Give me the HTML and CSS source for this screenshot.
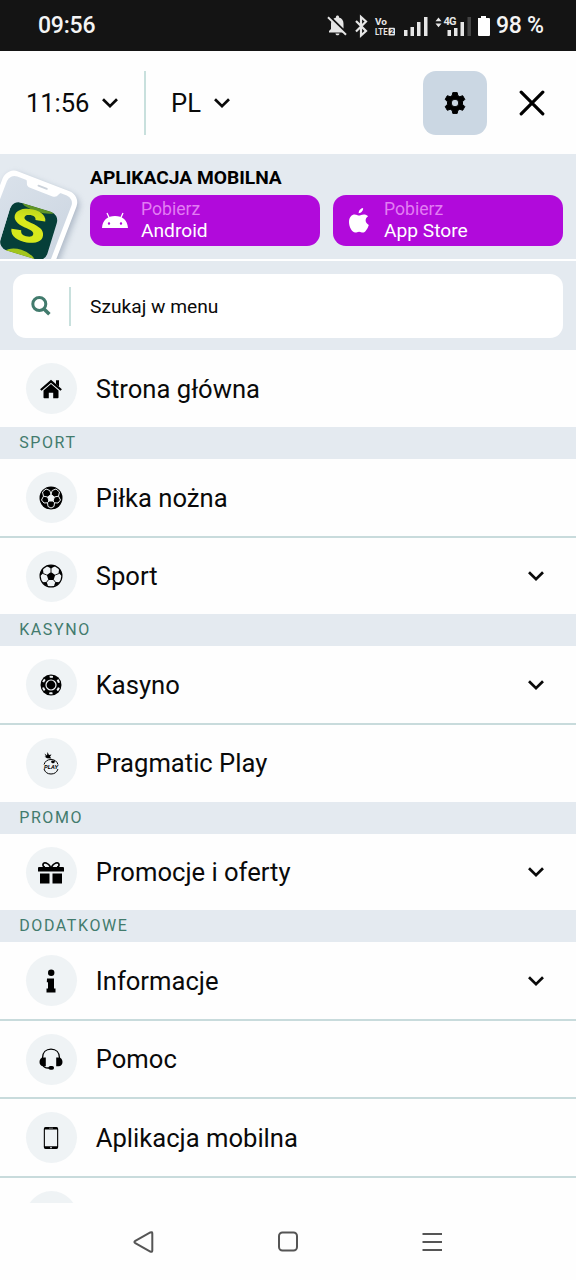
FILE: index.html
```html
<!DOCTYPE html>
<html lang="pl">
<head>
<meta charset="utf-8">
<title>Menu</title>
<link rel="stylesheet" href="styles.css">
</head>
<body>
<svg class="defs" width="0" height="0">
  <symbol id="chevron" viewBox="0 0 18 12"><path d="M2 2.200 9 9.200 16 2.200" fill="none" stroke="currentColor" stroke-width="2.700"/></symbol>
</svg>
<div class="screen">
  <div class="status">
    <span class="clock">09:56</span>
    <svg class="status-icons" width="168" height="24" viewBox="0 0 168 24" fill="#e6e6e6">
      <path d="M3 18.500v-1.600l2-2V10c0-1.500.4-2.600 1-3.500L18 18.500zM7.500 4.800C8.500 4 9.500 3.700 10 3.500V3c0-1 .6-1.500 1.500-1.500S13 2 13 3v.5c3 .7 4.500 3.200 4.500 6.300v4.700zM9.500 19.500h4c0 1-.8 1.800-2 1.800s-2-.8-2-1.800z"/>
      <path d="M2 3.300 20 20.700" stroke="#e6e6e6" stroke-width="1.900"/>
      <path d="m30 7 10 10-5 4.500V3l5 4.500-10 10" fill="none" stroke="#e6e6e6" stroke-width="2.200"/>
      <text x="49" y="10.500" class="tiny" textLength="12" lengthAdjust="spacingAndGlyphs">Vo</text>
      <text x="49" y="21.200" class="tiny" textLength="12.500" lengthAdjust="spacingAndGlyphs">LTE</text>
      <rect x="62.500" y="13.800" width="6.500" height="7.600" rx="1"/>
      <text x="63.900" y="20" class="micro">2</text>
      <path d="M78 16h3.500v6H78zM84.500 13H88v9h-3.500zM91 8h3.500v14H91zM98 3h3.500v19H98z"/>
      <path d="m109.500 7.300 3-3.800 3 3.800zm0 2.200h6l-3 3.800z"/>
      <text x="117.500" y="11" class="tiny net" textLength="13">4G</text>
      <path d="M121.500 16h3.500v6h-3.500zM128 14h3.500v8H128zM134.500 8h3.500v14h-3.500z"/>
      <path d="M141.500 3h3.500v19h-3.500z" fill="#444"/>
      <path d="M152 4h3V2h5v2h3q1 0 1 1v16q0 1-1 1h-10q-1 0-1-1z" fill="#fff"/>
    </svg>
    <span class="battery">98 %</span>
  </div>

  <div class="topbar">
    <div class="picker time"><span>11:56</span><svg width="18" height="12"><use href="#chevron"/></svg></div>
    <div class="picker lang"><span>PL</span><svg width="18" height="12"><use href="#chevron"/></svg></div>
    <div class="settings">
      <svg width="22" height="22" viewBox="0 0 22 22"><path fill-rule="evenodd" stroke="#000" stroke-width="1" stroke-linejoin="round" d="M8.800.6h4.400l.6 3 2 1.100 2.900-1 2.100 3.700L18.500 9.700v2.600l2.300 2.300-2.100 3.700-2.900-1-2 1.100-.6 3H8.800l-.6-3-2-1.100-2.900 1-2.100-3.700 2.300-2.300V9.700L1.200 7.400l2.100-3.700 2.900 1 2-1.100zM11 7.200a3.800 3.800 0 1 0 0 7.600 3.800 3.800 0 0 0 0-7.600z"/></svg>
    </div>
    <svg class="close" width="26" height="26" viewBox="0 0 26 26"><path d="M2.200 2.200 23.800 23.800M23.800 2.200 2.200 23.800" stroke="#000" stroke-width="3.200" stroke-linecap="round"/></svg>
  </div>

  <div class="banner">
    <svg class="phone" width="90" height="105" viewBox="0 0 90 105">
      <defs>
        <linearGradient id="glass" x1="0" y1="0" x2="1" y2="1"><stop offset="0" stop-color="#d9e1ea"/><stop offset="1" stop-color="#c9d3df"/></linearGradient>
        <linearGradient id="lime" x1="0" y1="0" x2="0" y2="1"><stop offset="0" stop-color="#a5c61d"/><stop offset=".4" stop-color="#dbea1b"/><stop offset="1" stop-color="#d2e51d"/></linearGradient>
        <filter id="soft" x="-30%" y="-30%" width="160%" height="160%"><feGaussianBlur stdDeviation="3"/></filter>
        <clipPath id="tile"><rect x="-24" y="-24" width="49" height="50" rx="9"/></clipPath>
      </defs>
      <g transform="translate(12 14) rotate(21)">
        <rect x="-2" y="3" width="79" height="140" rx="12" fill="#8d9baf" opacity=".65" filter="url(#soft)"/>
        <rect x="-5" y="1" width="79" height="140" rx="12" fill="#fff"/>
        <rect x="0" y="6" width="69" height="130" rx="8" fill="url(#glass)"/>
        <path d="M15 5h42q-3 0-4 3-1 4-5 4H24q-4 0-5-4-1-3-4-3z" fill="#fff"/>
        <path d="M31 7h9" stroke="#cbd2da" stroke-width="1.800" stroke-linecap="round"/>
      </g>
      <g transform="translate(28.500 76) rotate(17)">
        <g clip-path="url(#tile)">
          <rect x="-24" y="-24" width="50" height="50" fill="#063f39"/>
          <ellipse cx="3" cy="-25" rx="17" ry="5" fill="#5f9427"/>
          <ellipse cx="-1" cy="32" rx="18" ry="11" fill="#a2c51d"/>
        </g>
      </g>
      <text x="10" y="88" class="brand" transform="rotate(9 28 74)" textLength="36" lengthAdjust="spacingAndGlyphs" fill="url(#lime)">S</text>
    </svg>
    <div class="promo">
      <div class="promo-title">APLIKACJA MOBILNA</div>
      <div class="stores">
        <div class="store">
          <svg class="droid" width="26" height="18" viewBox="0 0 26 18" fill="#fff"><path fill-rule="evenodd" d="M0 17C.5 9 5.500 5 13 5S25.500 9 26 17zM7 11.300a1.200 1.200 0 1 0 0 2.400 1.200 1.200 0 0 0 0-2.400zm12 0a1.200 1.200 0 1 0 0 2.400 1.200 1.200 0 0 0 0-2.400z"/><path d="M7.500 7.500 5 2M18.500 7.500 21 2" stroke="#fff" stroke-width="1.300"/></svg>
          <div><span class="get">Pobierz</span><span>Android</span></div>
        </div>
        <div class="store">
          <svg class="apple" width="20" height="27" viewBox="0 0 21 27" fill="#fff"><path d="M14.800.5c.2 2.800-1.900 5.400-4.600 5.500C10 3.400 12.200.8 14.800.5zM20 9.100c-3.700 2.200-3.200 7.200.8 9-1.200 3.700-3.800 8.100-6.300 8-1.500 0-2.100-.9-3.900-.9s-2.400.9-3.900.9C3.200 26.200 0 20 0 15c0-5.100 2.900-7.800 6-7.800 1.900 0 3.200 1.100 4.500 1.100s2.700-1.200 5-1.200c1.800 0 3.400.7 4.500 2z"/></svg>
          <div><span class="get">Pobierz</span><span>App Store</span></div>
        </div>
      </div>
    </div>
  </div>

  <div class="search-wrap">
    <div class="search">
      <span class="lens"><svg width="20" height="20" viewBox="0 0 20 20" fill="none" stroke="#427b6d"><circle cx="8.300" cy="8" r="6.500" stroke-width="3"/><path d="m12.700 12.700 5.700 5.500" stroke-width="3.600"/></svg></span>
      <span class="placeholder">Szukaj w menu</span>
    </div>
  </div>

  <div class="menu">
    <div class="row">
      <span class="disc"><svg width="22" height="20" viewBox="0 0 22 20"><path d="M11 5 3.500 11.500v7q0 .8.800.8H8.800v-5.600h4.400v5.600h4.500q.8 0 .8-.8v-7z"/><path d="M.8 11 11 2.300 21.200 11" fill="none" stroke="#000" stroke-width="2.200"/><path d="M16 1.200h3v6.500l-3-2.500z"/></svg></span>
      <span class="label">Strona główna</span>
    </div>
    <div class="section">SPORT</div>
    <div class="row line">
      <span class="disc"><svg width="24" height="24" viewBox="0 0 24 24"><circle cx="12" cy="12" r="11.500"/><g fill="none" stroke="#eff3f5" stroke-width="1"><path d="m12 8.500 3.300 2.500-1.200 4H9.900L8.700 11z" fill="#eff3f5"/><path d="M12 8.500 10.800 4.500 7 3 3.500 6l1 4.200L8.700 11M12 8.500l1.200-4L17 3l3.500 3-1 4.200-4.200.8M19.500 10.200l2 3.800-2.500 3-3.500-.2-1.400-1.800M4.500 10.200l-2 3.800L5 17l3.500-.2L9.900 15M8.500 16.800l.5 3.700 3 1.500 3-1.500.5-3.700"/></g></svg></span>
      <span class="label">Piłka nożna</span>
    </div>
    <div class="row">
      <span class="disc"><svg width="24" height="24" viewBox="0 0 24 24"><circle cx="12" cy="12" r="10.900" fill="none" stroke="#000" stroke-width="1.200"/><path d="m12 8 4.200 3-1.600 4.900H9.400L7.800 11zM7.600 2.100 12 4.400l4.400-2.300C13.500.9 10.500.9 7.600 2.100zM1.200 12l3.200-3-.5-4.300C2 6.800 1.100 9.300 1.200 12zm21.600 0-3.200-3 .5-4.300c1.900 2.100 2.800 4.600 2.700 7.300zM3.400 18.300l4.200-.2 1.500 4c-2.300-.7-4.200-1.900-5.700-3.800zm17.200 0-4.200-.2-1.500 4c2.300-.7 4.200-1.900 5.700-3.800z"/><path d="M12 8V4M7.800 11 4 9.500M16.200 11 20 9.500M9.400 15.900l-2 2.500M14.600 15.900l2 2.500" stroke="#000" stroke-width=".9"/></svg></span>
      <span class="label">Sport</span><svg class="more" width="18" height="12"><use href="#chevron"/></svg>
    </div>
    <div class="section">KASYNO</div>
    <div class="row line">
      <span class="disc"><svg width="22" height="22" viewBox="0 0 22 22"><circle cx="11" cy="11" r="10.500"/><g fill="none" stroke="#eff3f5"><circle cx="11" cy="11" r="8.300" stroke-width="2" stroke-dasharray="3.300 5.390" stroke-dashoffset="-2.700"/><circle cx="11" cy="11" r="5" stroke-width="1.200"/></g></svg></span>
      <span class="label">Kasyno</span><svg class="more" width="18" height="12"><use href="#chevron"/></svg>
    </div>
    <div class="row">
      <span class="disc"><svg width="20" height="24" viewBox="0 0 20 24"><path d="M3 13.500a7.400 7.400 0 0 1 14 0M3 18a7.400 7.400 0 0 0 14 0" fill="none" stroke="#000" stroke-width="1"/><path d="m3.500 2.500 2.500 2L6.500 1 8 4l2.500-.5L9 5.800l1.500 1.700-4.500-.3-2.500-1.700h1.500z"/><ellipse cx="12" cy="10.800" rx="1.900" ry="1.400"/><text x="3" y="17.700" class="play" textLength="14" lengthAdjust="spacingAndGlyphs">PLAY</text></svg></span>
      <span class="label">Pragmatic Play</span>
    </div>
    <div class="section">PROMO</div>
    <div class="row">
      <span class="disc"><svg width="26" height="23" viewBox="0 0 26 23"><path d="M1 6h24q1 0 1 1v3.500H0V7q0-1 1-1zM2 12.500h9.500V22.500H2zM14.500 12.500H24V22.500h-9.500z"/><path d="M12.500 6C10.500 2 5.500.2 5 3.500 4.800 5 5.500 6 7 6M13.500 6C15.500 2 20.500.2 21 3.500 21.200 5 20.500 6 19 6" fill="none" stroke="#000" stroke-width="1.700"/></svg></span>
      <span class="label">Promocje i oferty</span><svg class="more" width="18" height="12"><use href="#chevron"/></svg>
    </div>
    <div class="section">DODATKOWE</div>
    <div class="row line">
      <span class="disc"><svg width="10" height="24" viewBox="0 0 10 24"><circle cx="5.200" cy="3.800" r="3.200"/><path d="M1 9.500h7v10h1.500v4H.5v-4H2v-6.300H.8z"/></svg></span>
      <span class="label">Informacje</span><svg class="more" width="18" height="12"><use href="#chevron"/></svg>
    </div>
    <div class="row line">
      <span class="disc"><svg width="24" height="22" viewBox="0 0 24 22"><path d="M3.500 10C3.500 4.500 7 1.200 12 1.200s8.500 3.300 8.500 8.800M3.800 17q1.200 3 5.200 3h3" fill="none" stroke="#000" stroke-width="1.300"/><path d="M6.800 9.500v8.800H4.500C2 18.300.5 16.500.5 14s1.500-4.500 4-4.500zM17.200 9.500v8.800h2.300c2.500 0 4-1.800 4-4.300s-1.500-4.500-4-4.500z"/><rect x="9.500" y="18" width="5.500" height="3.800" rx="1.800"/></svg></span>
      <span class="label">Pomoc</span>
    </div>
    <div class="row line">
      <span class="disc"><svg width="16" height="22" viewBox="0 0 16 22"><path fill-rule="evenodd" d="M2.500 0h11q1.700 0 1.700 2v18q0 2-1.700 2h-11Q.8 22 .8 20V2q0-2 1.700-2zM1.900 2.400v16.800h12.200V2.400z"/><path d="M6 1.200h4" stroke="#bbb" stroke-width=".6"/><circle cx="8" cy="20.600" r=".8" fill="#eff3f5"/></svg></span>
      <span class="label">Aplikacja mobilna</span>
    </div>
    <div class="row"><span class="disc"></span></div>
  </div>

  <div class="nav">
    <svg width="22" height="24" viewBox="0 0 22 24"><path d="M2.300 10.800 17.300 2.500q2-1 2 1v17q0 2-2 1L2.300 13.200q-1.800-1.200 0-2.400z"/></svg>
    <svg width="22" height="24" viewBox="0 0 22 24"><rect x="2" y="2.500" width="18" height="18" rx="3.500"/></svg>
    <svg width="22" height="24" viewBox="0 0 22 24"><path d="M1.500 4h19.500M1.500 12h19.500M1.500 20h19.500"/></svg>
  </div>
</div>
</body>
</html>
```
FILE: styles.css
```css
* { box-sizing: border-box; }
body { margin: 0; font-family: Roboto, "Noto Sans", sans-serif; color: #0a0a0a; background: #fff; }
svg { display: block; flex: none; }
.defs { position: absolute; }
.screen { width: 576px; height: 1280px; display: flex; flex-direction: column; overflow: hidden; background: #fefefe; }

.status { height: 51px; flex: none; background: #141414; color: #f4f4f4; display: flex; align-items: center; padding: 0 32px 0 38px; font-size: 23px; }
.clock { font-weight: 500; letter-spacing: -.2px; }
.status-icons { margin-left: auto; margin-right: 2px; }
.battery { width: 48px; white-space: nowrap; font-weight: 500; letter-spacing: -.3px; }
.tiny { font-size: 9.5px; font-weight: 700; }
.net { font-size: 11px; }
.micro { font-size: 7px; font-weight: 700; fill: #141414; }

.topbar { height: 103px; flex: none; display: flex; align-items: center; padding: 0 31.5px 0 26px; font-size: 25.6px; }
.picker { display: flex; align-items: center; gap: 12px; height: 64px; }
.time { width: 120px; border-right: 2px solid #c8e0dd; letter-spacing: -.1px; }
.lang { margin-left: 25px; }
.settings { width: 64px; height: 64px; margin-left: auto; border-radius: 13px; background: #cbd7e3; display: flex; align-items: center; justify-content: center; }
.close { margin-left: 32px; }

.banner { height: 107px; flex: none; display: flex; background: #e4eaf0; border-bottom: 2px solid #fff; }
.phone { width: 90px; }
.promo { flex: 1; padding: 13px 13px 0 0; }
.promo-title { font-size: 19.2px; line-height: 22px; font-weight: 700; color: #000; }
.stores { display: flex; gap: 13px; margin-top: 6px; }
.store { flex: 1; height: 51px; border-radius: 13px; background: #b10adb; display: flex; align-items: center; gap: 13px; padding: 0 0 1px 12px; color: #fff; font-size: 19.2px; line-height: 22.4px; }
.store span { display: block; }
.store .get { font-size: 17.6px; color: #e27df3; }
.apple { margin: 0 2px 0 4px; }

.search-wrap { flex: none; height: 89px; padding: 13px 13px 12px; background: #e4eaf0; }
.search { height: 64px; border-radius: 13px; background: #fff; display: flex; align-items: center; font-size: 19.2px; }
.lens { width: 58px; height: 39px; display: flex; align-items: center; justify-content: center; border-right: 2px solid #c8e0dd; }
.placeholder { margin-left: 19px; }

.menu { flex: none; height: 853px; overflow: hidden; background: #fefefe; padding-top: .4px; }
.row { height: 76.8px; display: flex; align-items: center; padding: .4px 31px 0 25.6px; }
.line { height: 78.4px; border-bottom: 2px solid #c8dbdc; padding-top: .8px; }
.disc { width: 51px; height: 51px; border-radius: 50%; background: #eff3f5; display: flex; align-items: center; justify-content: center; }
.label { margin-left: 19.2px; font-size: 25.6px; line-height: 30px; }
.more { margin-left: auto; }
.section { height: 32px; line-height: 32.6px; padding-left: 19.2px; background: #e4eaf0; color: #427b6d; font-size: 16px; letter-spacing: 1.6px; }

.nav { flex: 1; display: flex; justify-content: center; gap: 122px; align-items: center; background: #fefefe; }
.nav svg { fill: none; stroke: #555; stroke-width: 2; }

.brand { font-family: Roboto, sans-serif; font-size: 46px; font-weight: 900; }
.play { font-size: 5.500px; font-weight: 700; font-style: italic; }
```
